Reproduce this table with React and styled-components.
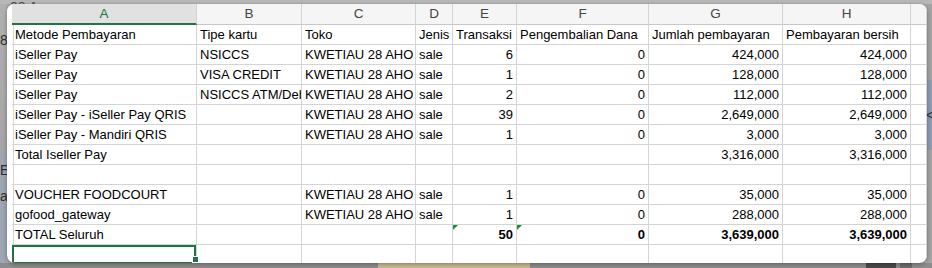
import React from 'react';
import styled, { createGlobalStyle } from 'styled-components';

const GlobalStyle = createGlobalStyle`
  html, body {
    margin: 0;
    padding: 0;
    background: #a9a9a9;
  }
  body {
    font-family: "Liberation Sans", Arial, sans-serif;
  }
`;

const COLS = [5, 185, 105, 114, 37, 64, 132, 134, 128, 16];
const LETTERS = ['', 'A', 'B', 'C', 'D', 'E', 'F', 'G', 'H', ''];

// page behind the sheet window: strips around a centre cell
const Backdrop = styled.div`
  width: 932px;
  height: 268px;
  display: grid;
  grid-template-columns: 7px 920px 5px;
  grid-template-rows: 4px 259px 5px;
  overflow: hidden;
  background: #a8a8a8;
`;

const TopStrip = styled.div`
  grid-column: 1 / 4;
  overflow: hidden;
  background: #b8b8b8;
  display: flex;
  align-items: flex-end;
  padding-left: 10px;
  font-size: 14px;
  line-height: 14px;
  color: #4a4a4a;
`;

const TopText = styled.span`
  margin-bottom: -10px;
`;

const SideStrip = styled.div`
  overflow: hidden;
  display: flex;
  flex-direction: column;
  padding-top: ${p => p.pad}px;
  font-size: 14px;
  line-height: 16px;
  color: #2e2e2e;
  background: ${p =>
    p.right
      ? 'linear-gradient(180deg, #a4a4a4 0px, #a4a4a4 76px, #8f9bb0 76px, #8f9bb0 146px, #a4a4a4 146px)'
      : 'linear-gradient(180deg, #b0b0b0 0px, #a6a6a6 140px, #9ea6b3 156px, #9ea6b3 100%)'};
`;

const SideLine = styled.span`
  height: 16px;
  margin-top: ${p => p.top || 0}px;
  margin-left: ${p => p.shift || 0}px;
`;

const BottomStrip = styled.div`
  grid-column: 1 / 4;
  background: linear-gradient(
    90deg,
    #8c8c8c 0px, #8c8c8c 378px,
    #c7b88e 378px, #c7b88e 530px,
    #8c8c8c 530px, #8c8c8c 866px,
    #4a4a4a 866px, #4a4a4a 896px,
    #8c8c8c 896px, #8c8c8c 900px,
    #6b6b6b 900px, #6b6b6b 912px,
    #8c8c8c 912px
  );
`;

const Window = styled.div`
  position: relative;
  z-index: 1;
  background: #fff;
  border-radius: 8px;
  overflow: hidden;
  box-shadow: 0 1px 4px rgba(0, 0, 0, 0.35);
`;

const Grid = styled.div`
  display: grid;
  grid-template-columns: ${COLS.map(c => c + 'px').join(' ')};
  grid-template-rows: 21px;
  grid-auto-rows: 20px;
  font-size: 13px;
  color: #000;
`;

const Head = styled.div`
  box-sizing: border-box;
  display: flex;
  align-items: center;
  justify-content: center;
  padding-bottom: 1px;
  background: ${p => (p.gutter ? '#fff' : p.active ? '#e1e1e1' : '#f5f5f5')};
  color: ${p => (p.active ? '#217346' : '#444')};
  border-right: ${p => (p.gutter ? '1px solid #fff' : '1px solid #d4d4d4')};
  border-bottom: ${p => (p.gutter ? 'none' : p.active ? '2px solid #217346' : '1px solid #c8c8c8')};
  font-size: 13.5px;
`;

const Cell = styled.div`
  position: relative;
  box-sizing: border-box;
  display: flex;
  align-items: flex-end;
  justify-content: ${p => (p.num ? 'flex-end' : 'flex-start')};
  padding: 0 3px 2px 3px;
  white-space: nowrap;
  font-weight: ${p => (p.bold ? 700 : 400)};
  border-right: 1px solid #d4d4d4;
  border-bottom: ${p => (p.gutter ? 'none' : '1px solid #d4d4d4')};
  box-shadow: ${p => (p.selected ? 'inset 0 0 0 2px #217346' : 'none')};
  overflow: ${p => (p.selected ? 'visible' : 'hidden')};

  /* green error mark in the corner */
  &::before {
    content: '';
    display: ${p => (p.flag ? 'block' : 'none')};
    position: absolute;
    left: 0;
    top: 0;
    border-top: 5px solid #1e8a3c;
    border-right: 5px solid transparent;
  }

  /* fill handle of the active cell */
  &::after {
    content: '';
    display: ${p => (p.selected ? 'block' : 'none')};
    position: absolute;
    right: -3px;
    bottom: 1px;
    width: 5px;
    height: 5px;
    background: #217346;
    border: 1px solid #fff;
    z-index: 2;
  }
`;

const rows = [
  ['Metode Pembayaran', 'Tipe kartu', 'Toko', 'Jenis', 'Transaksi', 'Pengembalian Dana', 'Jumlah pembayaran', 'Pembayaran bersih'],
  ['iSeller Pay', 'NSICCS', 'KWETIAU 28 AHO', 'sale', '6', '0', '424,000', '424,000'],
  ['iSeller Pay', 'VISA CREDIT', 'KWETIAU 28 AHO', 'sale', '1', '0', '128,000', '128,000'],
  ['iSeller Pay', 'NSICCS ATM/Debit', 'KWETIAU 28 AHO', 'sale', '2', '0', '112,000', '112,000'],
  ['iSeller Pay - iSeller Pay QRIS', '', 'KWETIAU 28 AHO', 'sale', '39', '0', '2,649,000', '2,649,000'],
  ['iSeller Pay - Mandiri QRIS', '', 'KWETIAU 28 AHO', 'sale', '1', '0', '3,000', '3,000'],
  ['Total Iseller Pay', '', '', '', '', '', '3,316,000', '3,316,000'],
  ['', '', '', '', '', '', '', ''],
  ['VOUCHER FOODCOURT', '', 'KWETIAU 28 AHO', 'sale', '1', '0', '35,000', '35,000'],
  ['gofood_gateway', '', 'KWETIAU 28 AHO', 'sale', '1', '0', '288,000', '288,000'],
  ['TOTAL Seluruh', '', '', '', '50', '0', '3,639,000', '3,639,000', 'total'],
  ['', '', '', '', '', '', '', '', 'selected'],
];

const App = () => {
  return (
    <>
      <GlobalStyle />
      <Backdrop>
        <TopStrip>
          <TopText>28 Aug</TopText>
        </TopStrip>
        <SideStrip pad={28}>
          <SideLine>8</SideLine>
          <SideLine top={114}>E</SideLine>
          <SideLine top={10}>a</SideLine>
        </SideStrip>
        <Window>
          <Grid>
            {LETTERS.map((l, i) => (
              <Head key={'h' + i} gutter={i === 0} active={l === 'A'}>{l}</Head>
            ))}
            {rows.map((r, ri) => {
              const kind = r[8];
              const cells = r.slice(0, 8);
              return (
                <React.Fragment key={ri}>
                  <Cell gutter />
                  {cells.map((v, ci) => (
                    <Cell
                      key={ci}
                      num={ri > 0 && ci >= 4}
                      bold={kind === 'total' && ci >= 4}
                      flag={kind === 'total' && (ci === 4 || ci === 5)}
                      selected={kind === 'selected' && ci === 0}
                    >
                      {v}
                    </Cell>
                  ))}
                  <Cell />
                </React.Fragment>
              );
            })}
          </Grid>
        </Window>
        <SideStrip right pad={103}>
          <SideLine shift={-1}>&lt;</SideLine>
        </SideStrip>
        <BottomStrip />
      </Backdrop>
    </>
  );
};

export default App;
